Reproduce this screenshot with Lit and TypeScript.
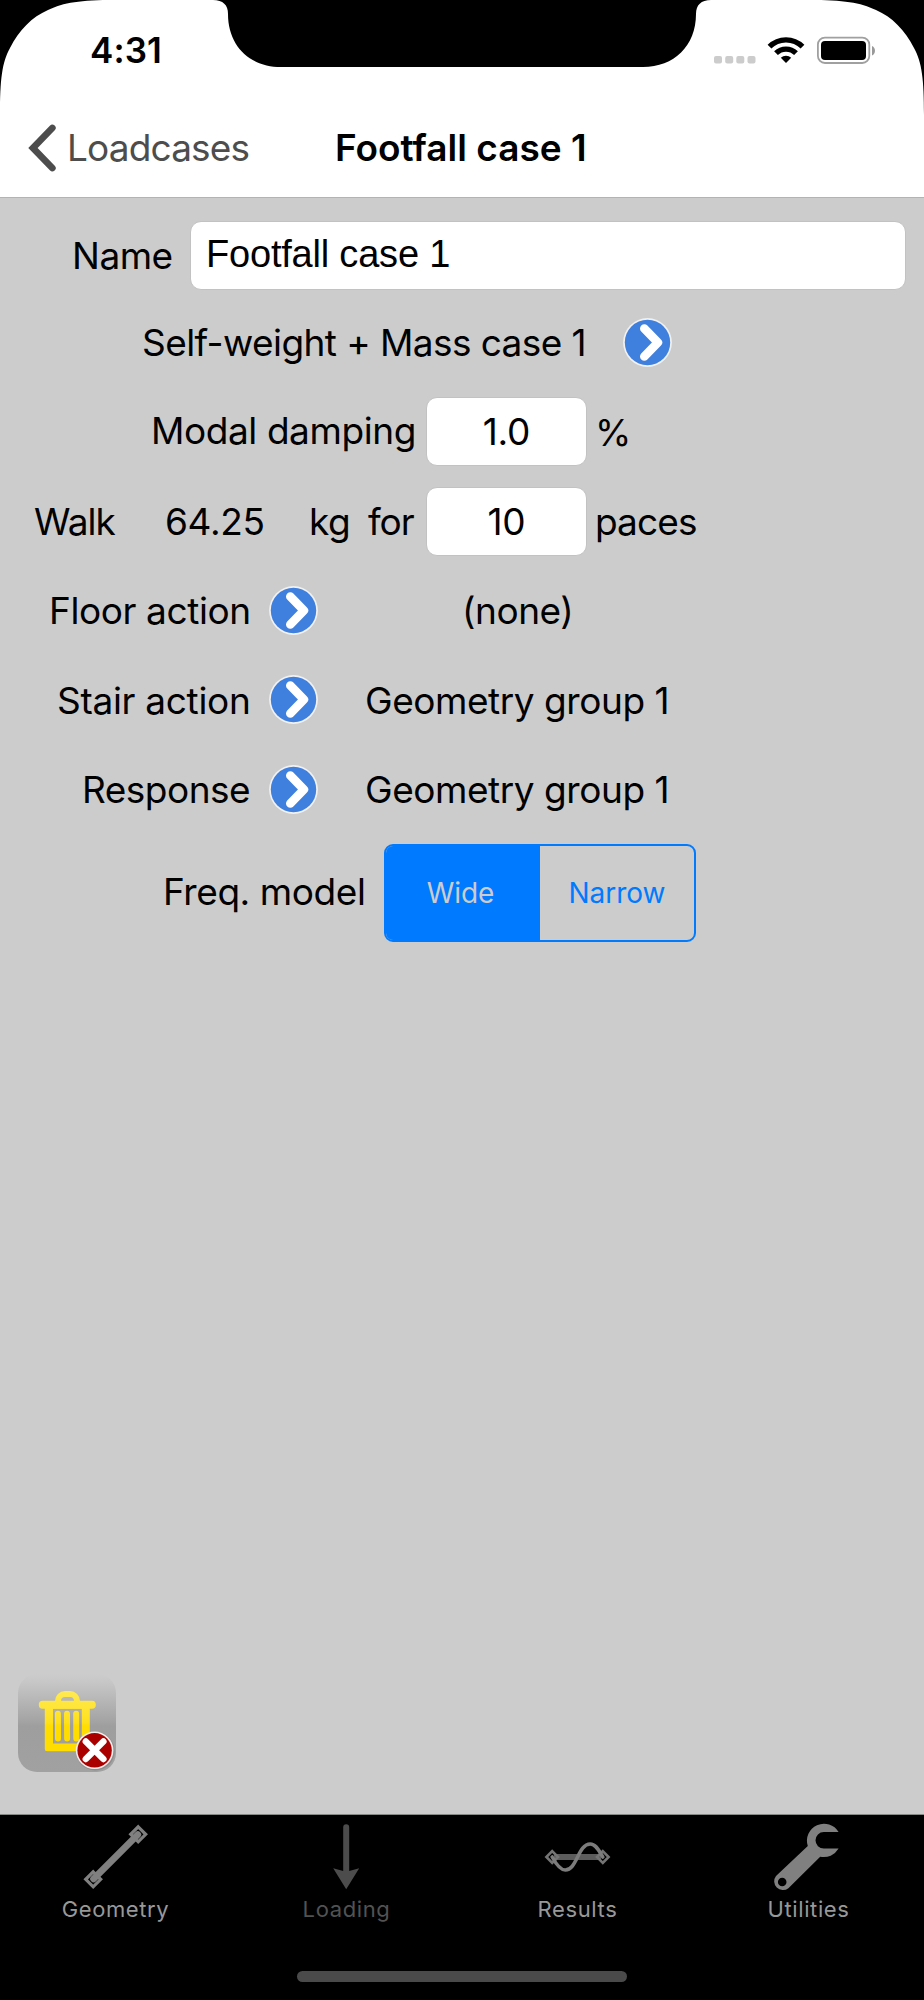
import { LitElement, html, css, svg } from "lit";
import { customElement, property, state } from "lit/decorators.js";

@customElement("go-button")
class GoButton extends LitElement {
  static styles = css`
    :host { display: block; width: 49px; height: 49px; }
    svg { display: block; }
  `;
  render() {
    return html`<svg width="49" height="49" viewBox="-24.5 -24.5 49 49">
      <circle r="24.4" fill="#f1f1f1"></circle>
      <circle r="22.7" fill="#3f7fdd"></circle>
      <path d="M-3.2 -14 L10.4 0 L-3.2 14" fill="none" stroke="#fff" stroke-width="8.6" stroke-linecap="round" stroke-linejoin="round"></path>
    </svg>`;
  }
}

const tabIcons: Record<string, unknown> = {
  Geometry: svg`
    <g fill="none" stroke="#808080">
      <path stroke-width="3.2" d="M63.2 11.8L70.7 19.3L63.2 26.8L55.7 19.3ZM18.2 56.8L25.7 64.3L18.2 71.8L10.7 64.3Z"></path>
      <path stroke-width="6.8" stroke-linecap="round" d="M62.8 19.7L18.6 63.9"></path>
    </g>`,
  Loading: svg`
    <path d="M37.2 12.3a3 3 0 0 1 6 0V56L53.2 53.3L40.2 74.3L27.2 53.3L37.2 56Z" fill="#4c4c4c"></path>`,
  Results: svg`
    <g fill="none">
      <path stroke="#5c5c5c" stroke-width="5.8" d="M17 42H64"></path>
      <path stroke="#747474" stroke-width="2.6" d="M15.2 36.2L21 42L15.2 47.8L9.4 42ZM65.8 36.2L71.6 42L65.8 47.8L60 42Z"></path>
      <path stroke="#7c7c7c" stroke-width="3.6" stroke-linecap="round" d="M15.2 42C19 49 23 55 28.3 55C40 55 41 29 53.2 29C59 29 62 36 65.8 42"></path>
    </g>`,
  Utilities: svg`
    <path fill="#808080" fill-rule="evenodd" d="M70.6 17A17 17 0 0 0 39.8 30.9L8 60.9A8.8 8.8 0 0 0 20.4 73.2L52.2 41.7A17 17 0 0 0 70.6 33.6H55.8A8.3 8.3 0 0 1 55.8 17ZM14.2 62.7a4.3 4.3 0 1 1 0 8.6a4.3 4.3 0 0 1 0-8.6Z"></path>`,
};

@customElement("tab-item")
class TabItem extends LitElement {
  @property() label = "";
  @property({ type: Boolean, reflect: true }) dim = false;
  static styles = css`
    :host { display: flex; flex-direction: column; align-items: center; color: #989898; }
    :host([dim]) { color: #525252; }
    svg { display: block; margin-right: 1px; }
    .label { font-weight: 400; font-size: 22px; line-height: 26px; padding-top: 1px; letter-spacing: 0.62px; white-space: nowrap; }
  `;
  render() {
    return html`<svg width="80" height="80" viewBox="0 0 80 80">${tabIcons[this.label]}</svg>
      <span class="label">${this.label}</span>`;
  }
}

@customElement("app-root")
class AppRoot extends LitElement {
  @state() private model = "Wide";

  static styles = css`
    :host { display: block; width: 924px; height: 2000px; position: relative; overflow: hidden; font-family: Inter, "Liberation Sans", sans-serif; background: #ccc; color: #000; }
    * { box-sizing: border-box; }
    svg { display: block; }
    .screen { display: flex; flex-direction: column; height: 2000px; }
    .bezel { position: absolute; left: 0; top: 0; }
    .status { height: 98px; background: #fff; display: flex; justify-content: space-between; align-items: flex-start; padding: 29px 48px 0 90px; }
    .time { font-size: 35px; line-height: 42px; font-weight: 600; letter-spacing: 0.09px; }
    .nav { height: 100px; background: #fff; border-bottom: 1px solid #b3b3b3; display: grid; grid-template-columns: 39px 268px 1fr; align-items: center; padding-left: 28px; font-size: 37px; line-height: 45px; white-space: nowrap; }
    .back { color: #4d4d4d; letter-spacing: -0.85px; }
    .title { font-weight: 600; }
    .form { flex: 1; padding-top: 15px; font-size: 37px; line-height: 45px; letter-spacing: -0.5px; display: flex; flex-direction: column; }
    .row { display: grid; align-items: center; white-space: nowrap; flex: none; height: 89px; }
    .tall { height: 90px; }
    .name { height: 85px; padding-left: 72px; grid-template-columns: 118px 716px; }
    .mass { padding-left: 142px; grid-template-columns: 481px 49px; letter-spacing: -0.58px; }
    .damping { padding-left: 151px; grid-template-columns: 275px 161px 8px auto; letter-spacing: -0.42px; }
    .walk { padding-left: 34px; grid-template-columns: 131px 144px 59px 58px 161px 8px auto; }
    .w1 { letter-spacing: -0.95px; }
    .w2 { letter-spacing: -0.35px; }
    .w4 { letter-spacing: -1px; }
    .w5 { letter-spacing: -0.9px; grid-column: 7; }
    .pct { grid-column: 4; }
    .floor { padding-left: 49px; grid-template-columns: 220px 193px auto; letter-spacing: -0.4px; }
    .stair { padding-left: 57px; grid-template-columns: 212px 96px auto; letter-spacing: -0.3px; }
    .resp { padding-left: 82px; grid-template-columns: 187px 96px auto; }
    .val { letter-spacing: -0.45px; }
    .freq { height: 118px; padding-left: 163px; grid-template-columns: 221px 312px; letter-spacing: -0.42px; }
    .up { padding-bottom: 4px; }
    .lift { margin-bottom: 1px; }
    .field { height: 69px; background: #fff; border: 1px solid #c2c2c2; border-radius: 11px; display: flex; align-items: center; justify-content: center; letter-spacing: -0.2px; }
    .wide { justify-content: flex-start; padding: 0 0 2px 15px; font-family: "Liberation Sans", Arial, sans-serif; font-size: 38px; line-height: 43px; letter-spacing: -0.2px; }
    .seg { height: 98px; border: 2px solid #007aff; border-radius: 9px; overflow: hidden; display: grid; grid-template-columns: 1fr 1fr; font-size: 28px; line-height: 34px; letter-spacing: 0; }
    .opt { display: flex; align-items: center; justify-content: center; color: #007aff; }
    .on { background: #007aff; color: #ccc; padding-right: 5px; letter-spacing: -0.1px; }
    .spacer { flex: 1; }
    .trash { width: 98px; height: 98px; margin: 0 0 42px 18px; flex: none; }
    .tabs { height: 186px; background: #000; border-top: 1px solid #868a86; display: flex; flex-direction: column; justify-content: space-between; align-items: center; padding-bottom: 18px; flex: none; }
    .items { width: 924px; display: grid; grid-template-columns: repeat(4, 1fr); }
    .home { width: 330px; height: 11px; border-radius: 6px; background: #4a4a4a; }
  `;

  private trash() {
    return html`<svg class="trash" viewBox="0 0 98 98" overflow="visible">
      <defs>
        <linearGradient id="bg" x1="0" y1="0" x2="0" y2="1">
          <stop offset="0" stop-color="#cccccc"></stop>
          <stop offset="0.08" stop-color="#c7c7c7"></stop>
          <stop offset="0.5" stop-color="#a2a2a2"></stop>
          <stop offset="0.53" stop-color="#9e9e9e"></stop>
          <stop offset="1" stop-color="#a1a1a1"></stop>
        </linearGradient>
        <linearGradient id="bin" gradientUnits="userSpaceOnUse" x1="0" y1="16" x2="0" y2="52">
          <stop offset="0" stop-color="#ffea55"></stop>
          <stop offset="0.9" stop-color="#ffe11a"></stop>
          <stop offset="1" stop-color="#ffdd00"></stop>
        </linearGradient>
      </defs>
      <rect width="98" height="98" rx="19" fill="url(#bg)"></rect>
      <path fill="none" stroke="url(#bin)" stroke-width="6" d="M40 29V27a7 7 0 0 1 7-7h5a7 7 0 0 1 7 7V29"></path>
      <rect x="20.8" y="26.8" width="57" height="8" rx="3.8" fill="url(#bin)"></rect>
      <path fill="url(#bin)" fill-rule="evenodd" d="M26.8 31H71.8V75a2.3 2.3 0 0 1-2.3 2.3H29a2.3 2.3 0 0 1-2.2-2.3ZM35 34.8V69.4H63.8V34.8Z"></path>
      <path fill="none" stroke="url(#bin)" stroke-width="6" stroke-linecap="round" d="M39.9 39.8L40 64.6M49 39.8L49.1 64.6M58.2 39.8L58.3 64.6"></path>
      <circle cx="77.3" cy="77.2" r="19.4" fill="#777" opacity="0.45"></circle>
      <circle cx="76.6" cy="76.3" r="18.8" fill="#f1eeee"></circle>
      <circle cx="76.6" cy="76.3" r="17.2" fill="#ab0000"></circle>
      <path stroke="#fff" stroke-width="6.4" stroke-linecap="round" d="M67.8 67.5L85.4 85.1M85.4 67.5L67.8 85.1"></path>
    </svg>`;
  }

  render() {
    return html`
      <div class="screen">
        <div class="status">
          <span class="time">4:31</span>
          <svg width="163" height="42" viewBox="0 0 163 42">
            <g fill="#ccc">
              <rect x="1" y="27" width="8" height="7.4" rx="2"></rect>
              <rect x="12.2" y="27" width="8" height="7.4" rx="2"></rect>
              <rect x="23.3" y="27" width="8" height="7.4" rx="2"></rect>
              <rect x="34.5" y="27" width="8" height="7.4" rx="2"></rect>
            </g>
            <g transform="translate(55 8)" fill="none" stroke="#000" stroke-width="5.3">
              <path d="M1.5 9.7A23.3 23.3 0 0 1 34.5 9.7M8 16.2A14.1 14.1 0 0 1 28 16.2"></path>
              <path stroke="none" fill="#000" d="M18 26L12.8 20.8A7.4 7.4 0 0 1 23.2 20.8Z"></path>
            </g>
            <rect x="104.9" y="8.6" width="51.4" height="25.4" rx="7" fill="none" stroke="#a0a0a0" stroke-width="1.8"></rect>
            <rect x="108" y="12" width="45" height="19" rx="4" fill="#000"></rect>
            <path d="M159 17a5.2 5.2 0 0 1 0 9.4Z" fill="#999"></path>
          </svg>
        </div>
        <div class="nav">
          <svg width="30" height="50" viewBox="0 0 30 50"><path d="M24.3 5L5 25L24.3 45" fill="none" stroke="#4d4d4d" stroke-width="6.8" stroke-linecap="round" stroke-linejoin="miter"></path></svg>
          <span class="back">Loadcases</span>
          <span class="title">Footfall case 1</span>
        </div>
        <div class="form">
          <div class="row name"><span>Name</span><div class="field wide">Footfall case 1</div></div>
          <div class="row mass"><span>Self-weight + Mass case 1</span><go-button></go-button></div>
          <div class="row tall damping">
            <span class="up">Modal damping</span><div class="field lift">1.0</div><span class="pct">%</span>
          </div>
          <div class="row walk">
            <span class="w1">Walk</span><span class="w2">64.25</span><span>kg</span><span class="w4">for</span>
            <div class="field">10</div><span class="w5">paces</span>
          </div>
          <div class="row floor"><span>Floor action</span><go-button></go-button><span class="val">(none)</span></div>
          <div class="row tall stair"><span>Stair action</span><go-button class="lift"></go-button><span class="val">Geometry group 1</span></div>
          <div class="row resp"><span>Response</span><go-button class="lift"></go-button><span class="val">Geometry group 1</span></div>
          <div class="row freq">
            <span class="up">Freq. model</span>
            <div class="seg">
              ${["Wide", "Narrow"].map((m) => html`<span class="opt ${m === this.model ? "on" : ""}" @click=${() => (this.model = m)}>${m}</span>`)}
            </div>
          </div>
          <div class="spacer"></div>
          ${this.trash()}
        </div>
        <div class="tabs">
          <div class="items">
            ${["Geometry", "Loading", "Results", "Utilities"].map((t) => html`<tab-item label=${t} ?dim=${t === "Loading"}></tab-item>`)}
          </div>
          <div class="home"></div>
        </div>
      </div>
      <svg class="bezel" width="924" height="116" viewBox="0 0 924 116">
        <path d="M0 0V115C0 80 2 62 10 48C19 30 32 17 48 10C64 2.5 80 0 115 0Z"></path>
        <path d="M924 0V115C924 80 922 62 914 48C905 30 892 17 876 10C860 2.5 844 0 809 0Z"></path>
        <path d="M213 0C223 0 228 5 228 14C228 46 250 67 281 67H643C674 67 696 46 696 14C696 5 701 0 711 0Z"></path>
      </svg>
    `;
  }
}
